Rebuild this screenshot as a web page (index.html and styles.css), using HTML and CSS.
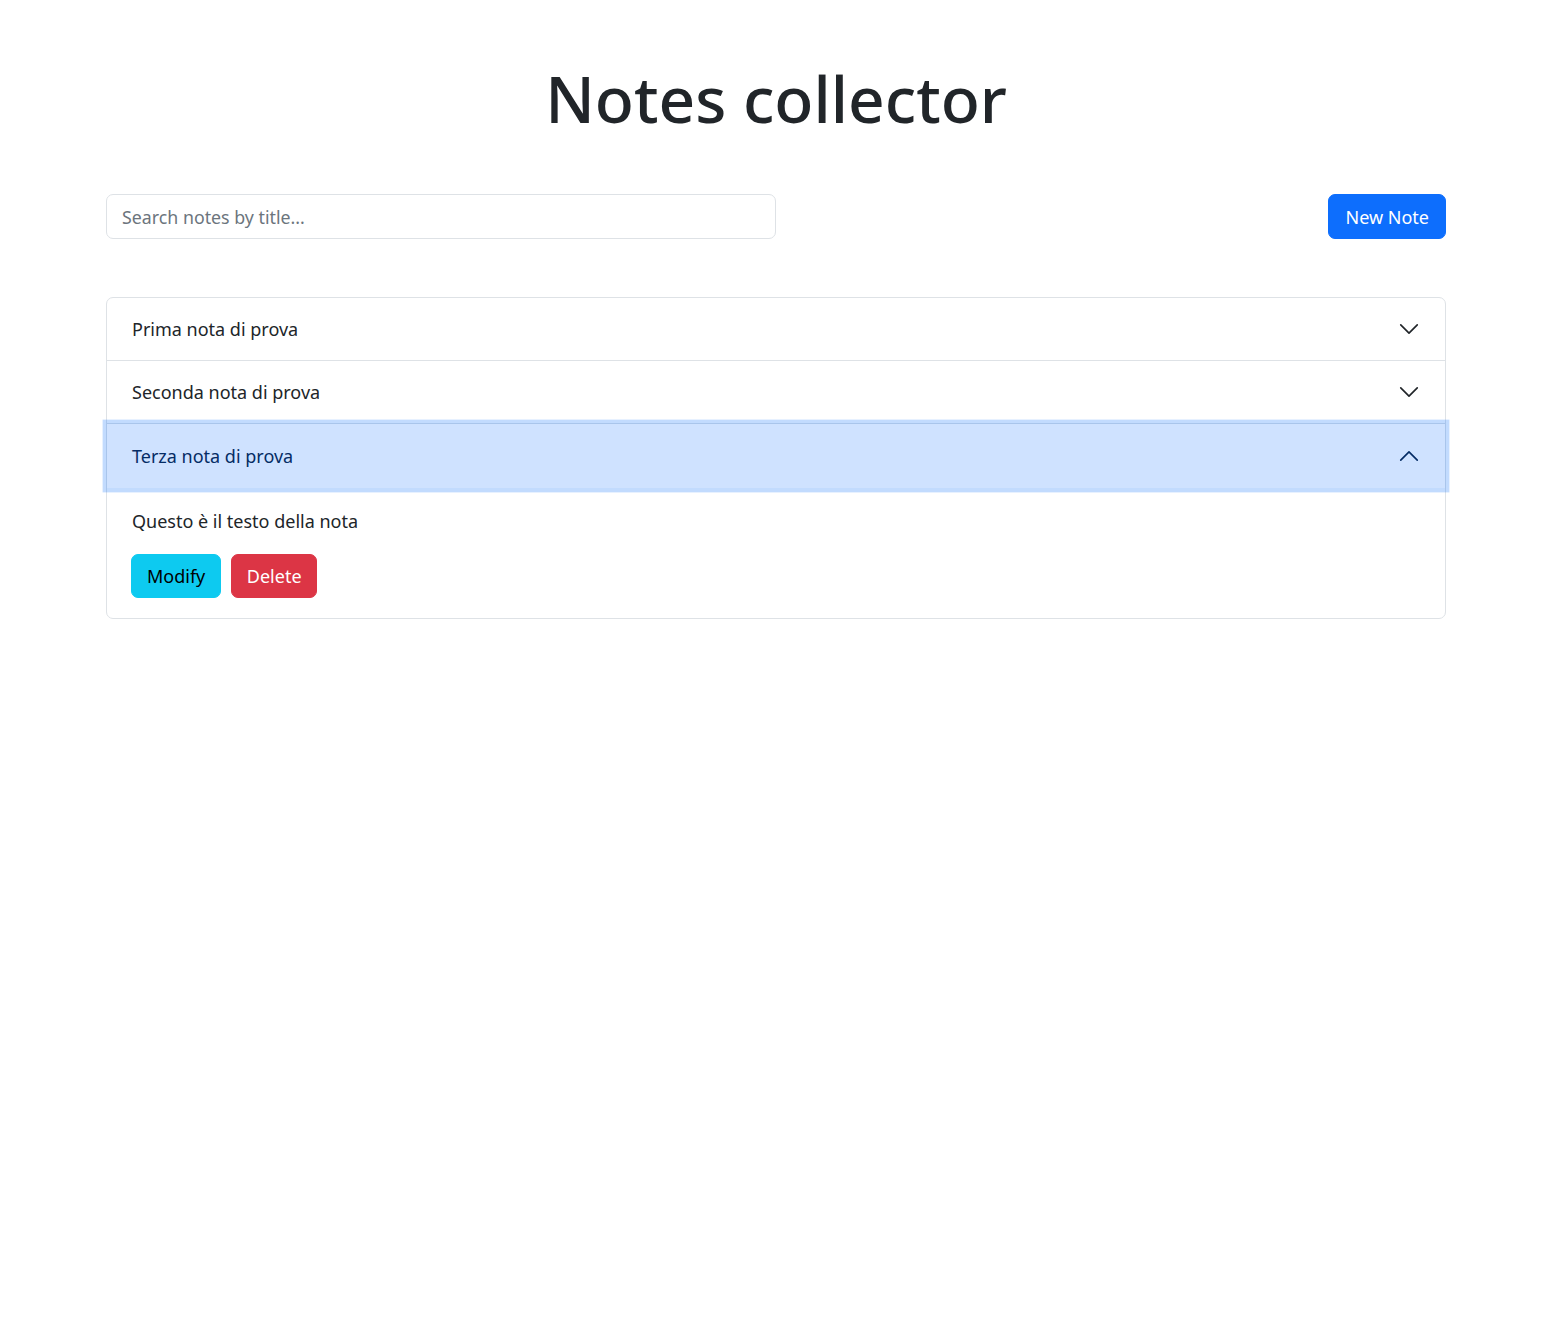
FILE: index.html
```html
<!DOCTYPE html>
<html lang="it">
<head>
<meta charset="utf-8">
<title>Notes collector</title>
<link rel="stylesheet" href="styles.css">
</head>
<body>
<div class="container">
  <h1 class="title">Notes collector</h1>
  <div class="toolbar">
    <input class="search" type="text" placeholder="Search notes by title...">
    <button class="btn btn-primary" type="button">New Note</button>
  </div>
  <div class="accordion">
    <div class="acc-item">
      <button class="acc-btn" type="button">
        <span>Prima nota di prova</span>
        <svg class="chev" viewBox="0 0 16 16" fill="none" stroke="#212529" stroke-linecap="round" stroke-linejoin="round"><path d="M2 5L8 11L14 5"/></svg>
      </button>
    </div>
    <div class="acc-item">
      <button class="acc-btn" type="button">
        <span>Seconda nota di prova</span>
        <svg class="chev" viewBox="0 0 16 16" fill="none" stroke="#212529" stroke-linecap="round" stroke-linejoin="round"><path d="M2 5L8 11L14 5"/></svg>
      </button>
    </div>
    <div class="acc-item">
      <button class="acc-btn active" type="button">
        <span>Terza nota di prova</span>
        <svg class="chev" viewBox="0 0 16 16" fill="none" stroke="#052c65" stroke-linecap="round" stroke-linejoin="round"><path d="M2 11L8 5L14 11"/></svg>
      </button>
      <div class="acc-body">
        <p class="note-text">Questo è il testo della nota</p>
        <div class="actions">
          <button class="btn btn-info" type="button">Modify</button>
          <button class="btn btn-danger" type="button">Delete</button>
        </div>
      </div>
    </div>
  </div>
</div>
</body>
</html>
```

FILE: styles.css
```css
* { box-sizing: border-box; }

body {
  margin: 0;
  font-family: "Noto Sans", "Open Sans", sans-serif;
  font-size: 18px;
  line-height: 1.5;
  color: #212529;
  background: #fff;
}

.container {
  width: 1340px;
  margin-left: 106px;
  padding-top: 59px;
}

.title {
  margin: 0;
  font-size: 64px;
  font-weight: 500;
  line-height: 79px;
  text-align: center;
  color: #212529;
}

.toolbar {
  margin-top: 56px;
  display: flex;
  justify-content: space-between;
  align-items: center;
}

.search {
  width: 670px;
  height: 45px;
  padding: 0 15px;
  border: 1px solid #dee2e6;
  border-radius: 7px;
  font-family: inherit;
  font-size: 17.8px;
  color: #212529;
  outline: none;
}

.search::placeholder {
  color: #6c757d;
}

.btn {
  font-family: inherit;
  font-size: 18px;
  line-height: 1;
  border: 1px solid transparent;
  border-radius: 7px;
  padding: 0 15px;
  cursor: pointer;
}

.btn-primary {
  height: 45px;
  padding: 0 16px;
  background: #0d6efd;
  border-color: #0d6efd;
  color: #fff;
}

.btn-info {
  height: 44px;
  background: #0dcaf0;
  border-color: #0dcaf0;
  color: #000;
}

.btn-danger {
  height: 44px;
  padding: 0 14.5px;
  background: #dc3545;
  border-color: #dc3545;
  color: #fff;
}

.accordion {
  margin-top: 58px;
  border: 1px solid #dee2e6;
  border-radius: 7px;
}

.acc-item + .acc-item {
  border-top: 1px solid #dee2e6;
}

.acc-btn {
  position: relative;
  display: flex;
  align-items: center;
  width: 100%;
  height: 62px;
  padding: 0 25px;
  border: 0;
  background: transparent;
  font-family: inherit;
  font-size: 18px;
  color: #212529;
  text-align: left;
  cursor: pointer;
}

.acc-item:first-child .acc-btn {
  border-radius: 6px 6px 0 0;
}

.acc-btn.active {
  height: 64px;
  background: #cfe2ff;
  color: #052c65;
  z-index: 3;
  box-shadow: 0 0 0 4.4px rgba(13, 110, 253, 0.25);
}

.chev {
  width: 22px;
  height: 22px;
  margin-left: auto;
  stroke-width: 1.2;
}

.acc-body {
  padding: 20px 24px 20px;
}

.note-text {
  margin: 0 0 19px 1px;
}

.actions {
  display: flex;
  gap: 10px;
}
```
